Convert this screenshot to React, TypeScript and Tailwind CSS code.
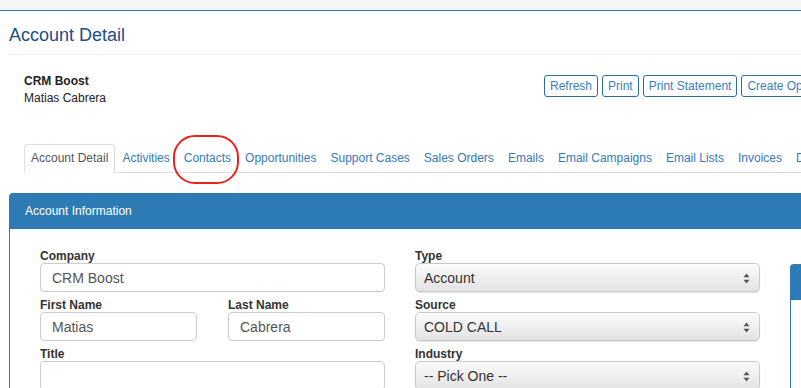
import React from "react";

const tabs = [
  "Account Detail",
  "Activities",
  "Contacts",
  "Opportunities",
  "Support Cases",
  "Sales Orders",
  "Emails",
  "Email Campaigns",
  "Email Lists",
  "Invoices",
  "Documents",
  "Notes",
];

function Arrows() {
  return (
    <svg width="7" height="11" viewBox="0 0 7 11" className="shrink-0">
      <path d="M3.5 0.5 L6.5 4.2 L0.5 4.2 Z" fill="#555" />
      <path d="M3.5 10.5 L6.5 6.8 L0.5 6.8 Z" fill="#555" />
    </svg>
  );
}

function Field({ label, value, w }: { label: string; value: string; w?: string }) {
  return (
    <div className={`mb-[3px] ${w ?? "w-full"}`}>
      <div className="h-[17px] pt-[3px] text-[12px] font-bold leading-[14px] text-[#333]">{label}</div>
      <div className="h-[29px] border border-[#cccccc] rounded-[4px] pl-[11px] pt-px flex items-center text-[14px] text-[#555] bg-white">
        {value}
      </div>
    </div>
  );
}

function SelectField({ label, value }: { label: string; value: string }) {
  return (
    <div className="mb-[3px] w-full">
      <div className="h-[17px] pt-[3px] text-[12px] font-bold leading-[14px] text-[#333]">{label}</div>
      <div className="h-[29px] border border-[#c9c9c9] rounded-[5px] pl-[8px] pr-[9px] pt-px flex items-center justify-between text-[14px] text-[#333] bg-linear-to-b from-[#fbfbfb] to-[#e3e3e3] shadow-[0_1px_1px_rgba(0,0,0,0.12)]">
        <span>{value}</span>
        <Arrows />
      </div>
    </div>
  );
}

export default function App() {
  return (
    <div className="relative w-[801px] h-[388px] overflow-hidden bg-white font-['Liberation_Sans',Arial,sans-serif]">
      <div className="h-[11px] bg-[#f5f5f5] border-b border-[#2b7bb9]" />
      <h1 className="mt-[14px] ml-[9px] text-[18px] leading-[20px] text-[#1c4c88] whitespace-nowrap">
        Account Detail
      </h1>
      <div className="mt-[9px] ml-[9px] w-[1000px] border-t border-[#eeeeee]" />

      <div className="mt-[18px] flex w-[1100px]">
        <div className="w-[544px] shrink-0 pl-[24px] text-[12px] leading-[17px] text-[#222]">
          <div className="font-bold">CRM Boost</div>
          <div>Matias Cabrera</div>
        </div>
        <div className="mt-[2px] flex gap-[4px] shrink-0">
          {["Refresh", "Print", "Print Statement", "Create Opportunity"].map((b) => (
            <div
              key={b}
              className="h-[22px] px-[5px] border border-[#2e6da4] rounded-[3px] text-[12px] leading-[20px] text-[#3a7fc1] whitespace-nowrap"
            >
              {b}
            </div>
          ))}
        </div>
      </div>

      <div className="mt-[37px] ml-[24px] w-[1100px] flex border-b border-[#dddddd]">
        {tabs.map((t, i) => (
          <div
            key={t}
            className={
              i === 0
                ? "h-[29px] -mb-px px-[6px] pt-[5px] border border-[#dddddd] border-b-white rounded-t-[4px] text-[12px] leading-[17px] text-[#555] whitespace-nowrap bg-white"
                : "h-[29px] -mb-px px-[6px] pt-[5px] border border-transparent text-[12px] leading-[17px] text-[#3479bd] whitespace-nowrap"
            }
          >
            {t}
          </div>
        ))}
      </div>

      <div className="mt-[20px] ml-[9px] w-[1000px]">
        <div className="h-[36px] bg-[#2d7bb5] rounded-tl-[4px] pl-[16px] flex items-center text-[12px] text-white">
          Account Information
        </div>
        <div className="border-l border-[#2d7bb5] pl-[30px] pt-[17px] flex gap-[30px] h-[200px]">
          <div className="w-[345px] shrink-0">
            <Field label="Company" value="CRM Boost" />
            <div className="flex gap-[31px]">
              <Field label="First Name" value="Matias" w="w-[157px]" />
              <Field label="Last Name" value="Cabrera" w="w-[157px]" />
            </div>
            <Field label="Title" value="" />
          </div>
          <div className="w-[345px] shrink-0">
            <SelectField label="Type" value="Account" />
            <SelectField label="Source" value="COLD CALL" />
            <SelectField label="Industry" value="-- Pick One --" />
          </div>
          <div className="w-[300px] shrink-0 mt-[18px]">
            <div className="h-[36px] bg-[#2d7bb5] rounded-tl-[4px]" />
            <div className="border-l border-[#2d7bb5] h-[150px]" />
          </div>
        </div>
      </div>

      <div className="absolute left-[173px] top-[135px] w-[66px] h-[49px] border-[2.5px] border-[#e8231f] rounded-[22px]" />
    </div>
  );
}
